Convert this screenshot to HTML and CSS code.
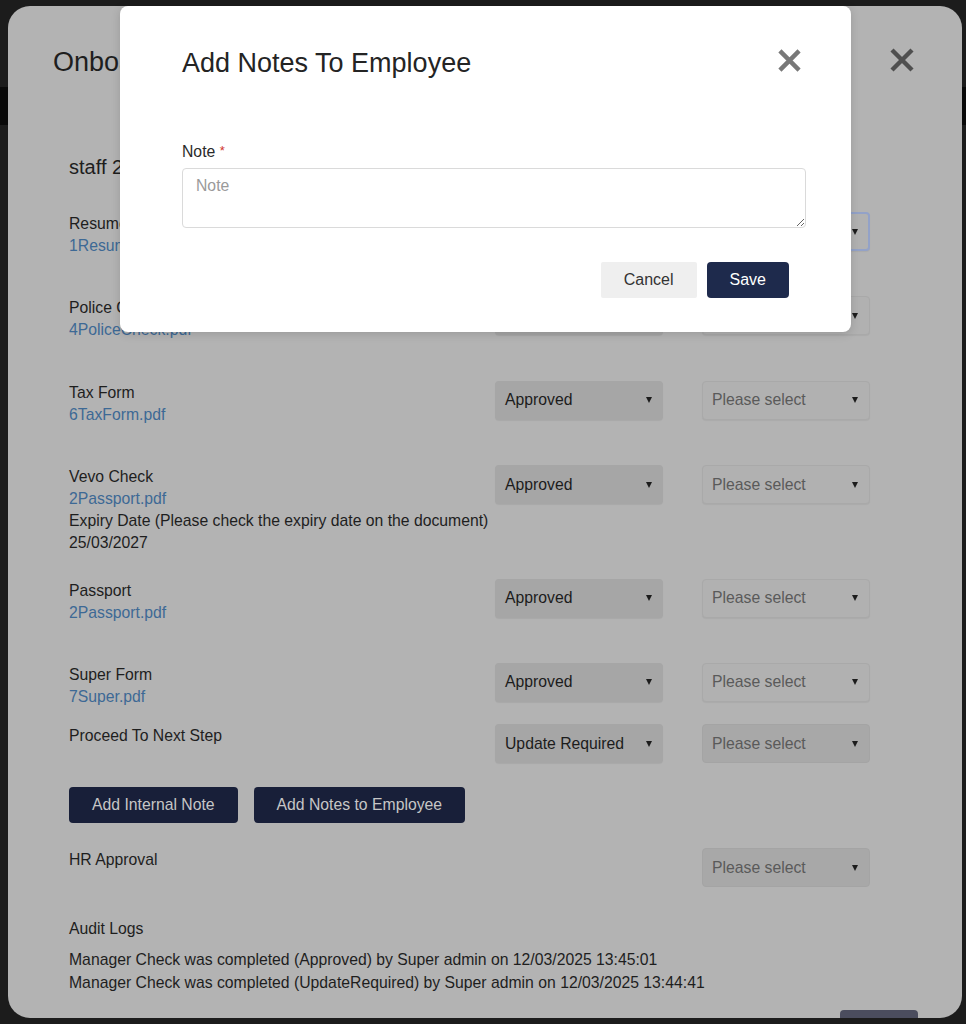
FILE: index.html
```html
<!DOCTYPE html>
<html lang="en">
<head>
<meta charset="utf-8">
<title>Add Notes To Employee</title>
<link rel="stylesheet" href="styles.css">
</head>
<body>
<div class="page-bg">
  <div class="page-nav"></div>
</div>

<div class="panel">
  <div class="panel-header">
    <h2 class="panel-title">Onboarding</h2>
    <svg class="close-x panel-close" viewBox="0 0 24 24"><path d="M2 2 L22 22 M22 2 L2 22"/></svg>
  </div>
  <div class="panel-body">
    <div class="staff">staff 2</div>

    <div class="row">
      <div class="row-label"><div>Resume</div><a class="doc">1Resume.pdf</a></div>
      <div class="sel-slot"><div class="select select-status"><span>Approved</span><i class="caret"></i></div></div>
      <div class="sel-slot"><div class="select select-pick select-focus"><span>Please select</span><i class="caret"></i></div></div>
    </div>

    <div class="row">
      <div class="row-label"><div>Police Check</div><a class="doc">4PoliceCheck.pdf</a></div>
      <div class="sel-slot"><div class="select select-status"><span>Approved</span><i class="caret"></i></div></div>
      <div class="sel-slot"><div class="select select-pick"><span>Please select</span><i class="caret"></i></div></div>
    </div>

    <div class="row">
      <div class="row-label"><div>Tax Form</div><a class="doc">6TaxForm.pdf</a></div>
      <div class="sel-slot"><div class="select select-status"><span>Approved</span><i class="caret"></i></div></div>
      <div class="sel-slot"><div class="select select-pick"><span>Please select</span><i class="caret"></i></div></div>
    </div>

    <div class="row">
      <div class="row-label"><div>Vevo Check</div><a class="doc">2Passport.pdf</a><div>Expiry Date (Please check the expiry date on the document)</div><div>25/03/2027</div></div>
      <div class="sel-slot"><div class="select select-status"><span>Approved</span><i class="caret"></i></div></div>
      <div class="sel-slot"><div class="select select-pick"><span>Please select</span><i class="caret"></i></div></div>
    </div>

    <div class="row">
      <div class="row-label"><div>Passport</div><a class="doc">2Passport.pdf</a></div>
      <div class="sel-slot"><div class="select select-status"><span>Approved</span><i class="caret"></i></div></div>
      <div class="sel-slot"><div class="select select-pick"><span>Please select</span><i class="caret"></i></div></div>
    </div>

    <div class="row row-tight">
      <div class="row-label"><div>Super Form</div><a class="doc">7Super.pdf</a></div>
      <div class="sel-slot"><div class="select select-status"><span>Approved</span><i class="caret"></i></div></div>
      <div class="sel-slot"><div class="select select-pick"><span>Please select</span><i class="caret"></i></div></div>
    </div>

    <div class="row row-single">
      <div class="row-label"><div>Proceed To Next Step</div></div>
      <div class="sel-slot"><div class="select select-status"><span>Update Required</span><i class="caret"></i></div></div>
      <div class="sel-slot"><div class="select select-disabled"><span>Please select</span><i class="caret"></i></div></div>
    </div>

    <div class="actions">
      <button class="btn-dark">Add Internal Note</button>
      <button class="btn-dark">Add Notes to Employee</button>
    </div>

    <div class="row row-hr">
      <div class="row-label"><div>HR Approval</div></div>
      <div class="sel-slot"></div>
      <div class="sel-slot"><div class="select select-disabled"><span>Please select</span><i class="caret"></i></div></div>
    </div>

    <div class="audit-title">Audit Logs</div>
    <div class="audit-log">
      <div>Manager Check was completed (Approved) by Super admin on 12/03/2025 13:45:01</div>
      <div>Manager Check was completed (UpdateRequired) by Super admin on 12/03/2025 13:44:41</div>
    </div>
  </div>
  <div class="panel-footer">
    <button class="btn-footer" aria-label="Close"></button>
  </div>
</div>

<div class="modal">
  <div class="modal-header">
    <h3 class="modal-title">Add Notes To Employee</h3>
    <svg class="close-x modal-close" viewBox="0 0 24 24"><path d="M2 2 L22 22 M22 2 L2 22"/></svg>
  </div>
  <div class="modal-body">
    <label class="field-label">Note <span class="req">*</span></label>
    <textarea class="note-input" placeholder="Note"></textarea>
  </div>
  <div class="modal-footer">
    <button class="btn-cancel">Cancel</button>
    <button class="btn-save">Save</button>
  </div>
</div>
</body>
</html>
```

FILE: styles.css
```css
html, body {
  margin: 0;
  padding: 0;
}
body {
  background: #1c1c1c;
  font-family: "Liberation Sans", Arial, Helvetica, sans-serif;
  width: 966px;
  height: 1024px;
  overflow: hidden;
  position: relative;
}

.page-nav {
  margin-top: 87px;
  height: 38px;
  background: #090909;
}

/* Underlying (dimmed) onboarding panel */
.panel {
  position: absolute;
  left: 8px;
  top: 6px;
  width: 954px;
  height: 1012px;
  background: #b3b3b3;
  border-radius: 22px;
  overflow: hidden;
  color: #1e1e1e;
}
.panel-header {
  display: flex;
  justify-content: space-between;
  align-items: center;
  padding: 41px 48px 0 45px;
}
.panel-title {
  margin: 0;
  font-size: 27px;
  line-height: 30px;
  font-weight: normal;
  color: #1e1e1e;
}
.close-x {
  display: block;
  fill: none;
  stroke-linecap: butt;
}
.panel-close {
  width: 24px;
  height: 24px;
  margin-top: -4px;
  stroke: #4f4f4f;
  stroke-width: 4.4;
}

.panel-body {
  padding: 0 92px 0 61px;
  font-size: 15.75px;
  line-height: 22px;
}
.staff {
  font-size: 20px;
  line-height: 24px;
  margin: 78px 0 33px;
}
.row {
  display: flex;
  align-items: flex-start;
  min-height: 60px;
  margin-bottom: 24.4px;
}
.row-tight {
  min-height: 0;
  margin-bottom: 16.4px;
}
.row-single {
  min-height: 0;
  margin-bottom: 24px;
}
.row-hr {
  min-height: 0;
  margin-bottom: 31px;
}
.row-label {
  flex: 1;
  padding-top: 1px;
}
.doc {
  display: block;
  color: #3d6995;
  text-decoration: none;
}
.sel-slot {
  width: 168px;
}
.sel-slot + .sel-slot {
  margin-left: 39px;
}
.select {
  height: 39px;
  box-sizing: border-box;
  border-radius: 4px;
  display: flex;
  align-items: center;
  justify-content: space-between;
  padding: 0 11px 0 10px;
  font-size: 15.75px;
}
.select-status {
  background: #a6a6a6;
  color: #1c1c1c;
  box-shadow: 0 1px 1px rgba(0, 0, 0, 0.06);
}
.select-pick {
  background: #b1b1b1;
  border: 1px solid #a9a9a9;
  color: #5a5a5a;
  padding-left: 9px;
  box-shadow: 0 1px 1px rgba(0, 0, 0, 0.05);
}
.select-disabled {
  background: #a8a8a8;
  border: 1px solid #a4a4a4;
  color: #5a5a5a;
  padding-left: 9px;
}
.select-focus {
  border: 2px solid #93a2c8;
  padding-left: 8px;
  padding-right: 10px;
}
.caret {
  display: block;
  width: 0;
  height: 0;
  border-left: 3.5px solid transparent;
  border-right: 3.5px solid transparent;
  border-top: 6px solid #1c1c1c;
}

.actions {
  display: flex;
  gap: 16px;
  margin-bottom: 25px;
}
.btn-dark {
  height: 36px;
  padding: 0 23px;
  border: none;
  border-radius: 4px;
  background: #181f39;
  color: #c6c6c6;
  font-family: inherit;
  font-size: 15.75px;
}

.audit-title {
  line-height: 22.3px;
}
.audit-log {
  margin-top: 7.6px;
  line-height: 23px;
}
.panel-footer {
  display: flex;
  justify-content: flex-end;
  padding-right: 44px;
  margin-top: 16px;
}
.btn-footer {
  width: 78px;
  height: 36px;
  border: none;
  border-radius: 4px;
  background: #4b4d5e;
}

/* Active modal */
.modal {
  position: absolute;
  left: 120px;
  top: 6px;
  width: 731px;
  background: #ffffff;
  border-radius: 8px;
  box-shadow: 0 2px 10px rgba(0, 0, 0, 0.15);
  color: #222;
}
.modal-header {
  display: flex;
  justify-content: space-between;
  align-items: center;
  padding: 42px 50px 0 62px;
}
.modal-title {
  margin: 0;
  font-size: 27px;
  line-height: 30px;
  font-weight: normal;
  color: #242424;
}
.modal-close {
  width: 23px;
  height: 23px;
  margin-top: -5px;
  stroke: #787878;
  stroke-width: 4.6;
}
.modal-body {
  padding: 0 45px 0 62px;
}
.field-label {
  display: block;
  margin-top: 63px;
  font-size: 15.75px;
  line-height: 20px;
  color: #2a2a2a;
}
.req {
  color: #d0342c;
  font-size: 13px;
  vertical-align: 2px;
}
.note-input {
  display: block;
  margin-top: 6px;
  width: 624px;
  height: 60px;
  box-sizing: border-box;
  border: 1px solid #dadada;
  border-radius: 4px;
  padding: 7px 13px;
  font-family: inherit;
  font-size: 15.75px;
  line-height: 20px;
  color: #333;
  resize: vertical;
}
.note-input::placeholder {
  color: #9a9a9a;
}
.modal-footer {
  display: flex;
  justify-content: flex-end;
  gap: 10px;
  margin-top: 34px;
  padding: 0 62px 34px 0;
}
.btn-cancel,
.btn-save {
  height: 36px;
  padding: 0 23px;
  border: none;
  border-radius: 4px;
  font-family: inherit;
  font-size: 16px;
}
.btn-cancel {
  background: #efefef;
  color: #333;
  border-radius: 2px;
}
.btn-save {
  background: #1e2a4c;
  color: #ffffff;
}
```
